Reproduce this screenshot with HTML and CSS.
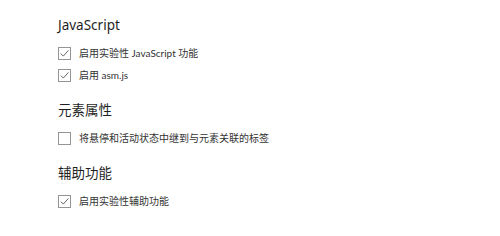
FILE: index.html
```html
<!DOCTYPE html>
<html lang="zh-CN">
<head>
    <meta charset="UTF-8">
    <title>高级设置</title>
    <link rel="stylesheet" href="styles.css">
</head>
<body>
    <div class="settings">
        <section class="group">
            <h2 class="group-title">JavaScript</h2>
            <div class="option">
                <span class="box checked"><svg viewBox="0 0 11 11"><path d="M1.8 5.6 L4.3 8.1 L9.4 2.4"/></svg></span>
                <span class="option-text">启用实验性 JavaScript 功能</span>
            </div>
            <div class="option">
                <span class="box checked"><svg viewBox="0 0 11 11"><path d="M1.8 5.6 L4.3 8.1 L9.4 2.4"/></svg></span>
                <span class="option-text">启用 asm.js</span>
            </div>
        </section>

        <section class="group">
            <h2 class="group-title">元素属性</h2>
            <div class="option">
                <span class="box"></span>
                <span class="option-text">将悬停和活动状态中继到与元素关联的标签</span>
            </div>
        </section>

        <section class="group">
            <h2 class="group-title">辅助功能</h2>
            <div class="option">
                <span class="box checked"><svg viewBox="0 0 11 11"><path d="M1.8 5.6 L4.3 8.1 L9.4 2.4"/></svg></span>
                <span class="option-text">启用实验性辅助功能</span>
            </div>
        </section>
    </div>
</body>
</html>
```

FILE: styles.css
```css
* {
    margin: 0;
    padding: 0;
    box-sizing: border-box;
}

body {
    font-family: "Noto Sans", "Noto Sans CJK SC", sans-serif;
    background-color: #ffffff;
    color: #222;
}

.settings {
    padding: 16px 0 0 58px;
}

.group + .group {
    margin-top: 15px;
}

.group-title {
    font-size: 13.5px;
    font-weight: normal;
    line-height: 18px;
    color: #1f1f1f;
    margin-bottom: 8px;
}

.option {
    display: flex;
    align-items: center;
    height: 22px;
    gap: 8px;
}

.box {
    flex: none;
    width: 13px;
    height: 13px;
    border: 1px solid #949494;
    background: #fff;
    display: flex;
}

.box svg {
    width: 11px;
    height: 11px;
    fill: none;
    stroke: #666;
    stroke-width: 1;
}

.option-text {
    font-family: Lato, "Noto Sans CJK SC", sans-serif;
    font-size: 10px;
    line-height: 14px;
    color: #333;
}
```
